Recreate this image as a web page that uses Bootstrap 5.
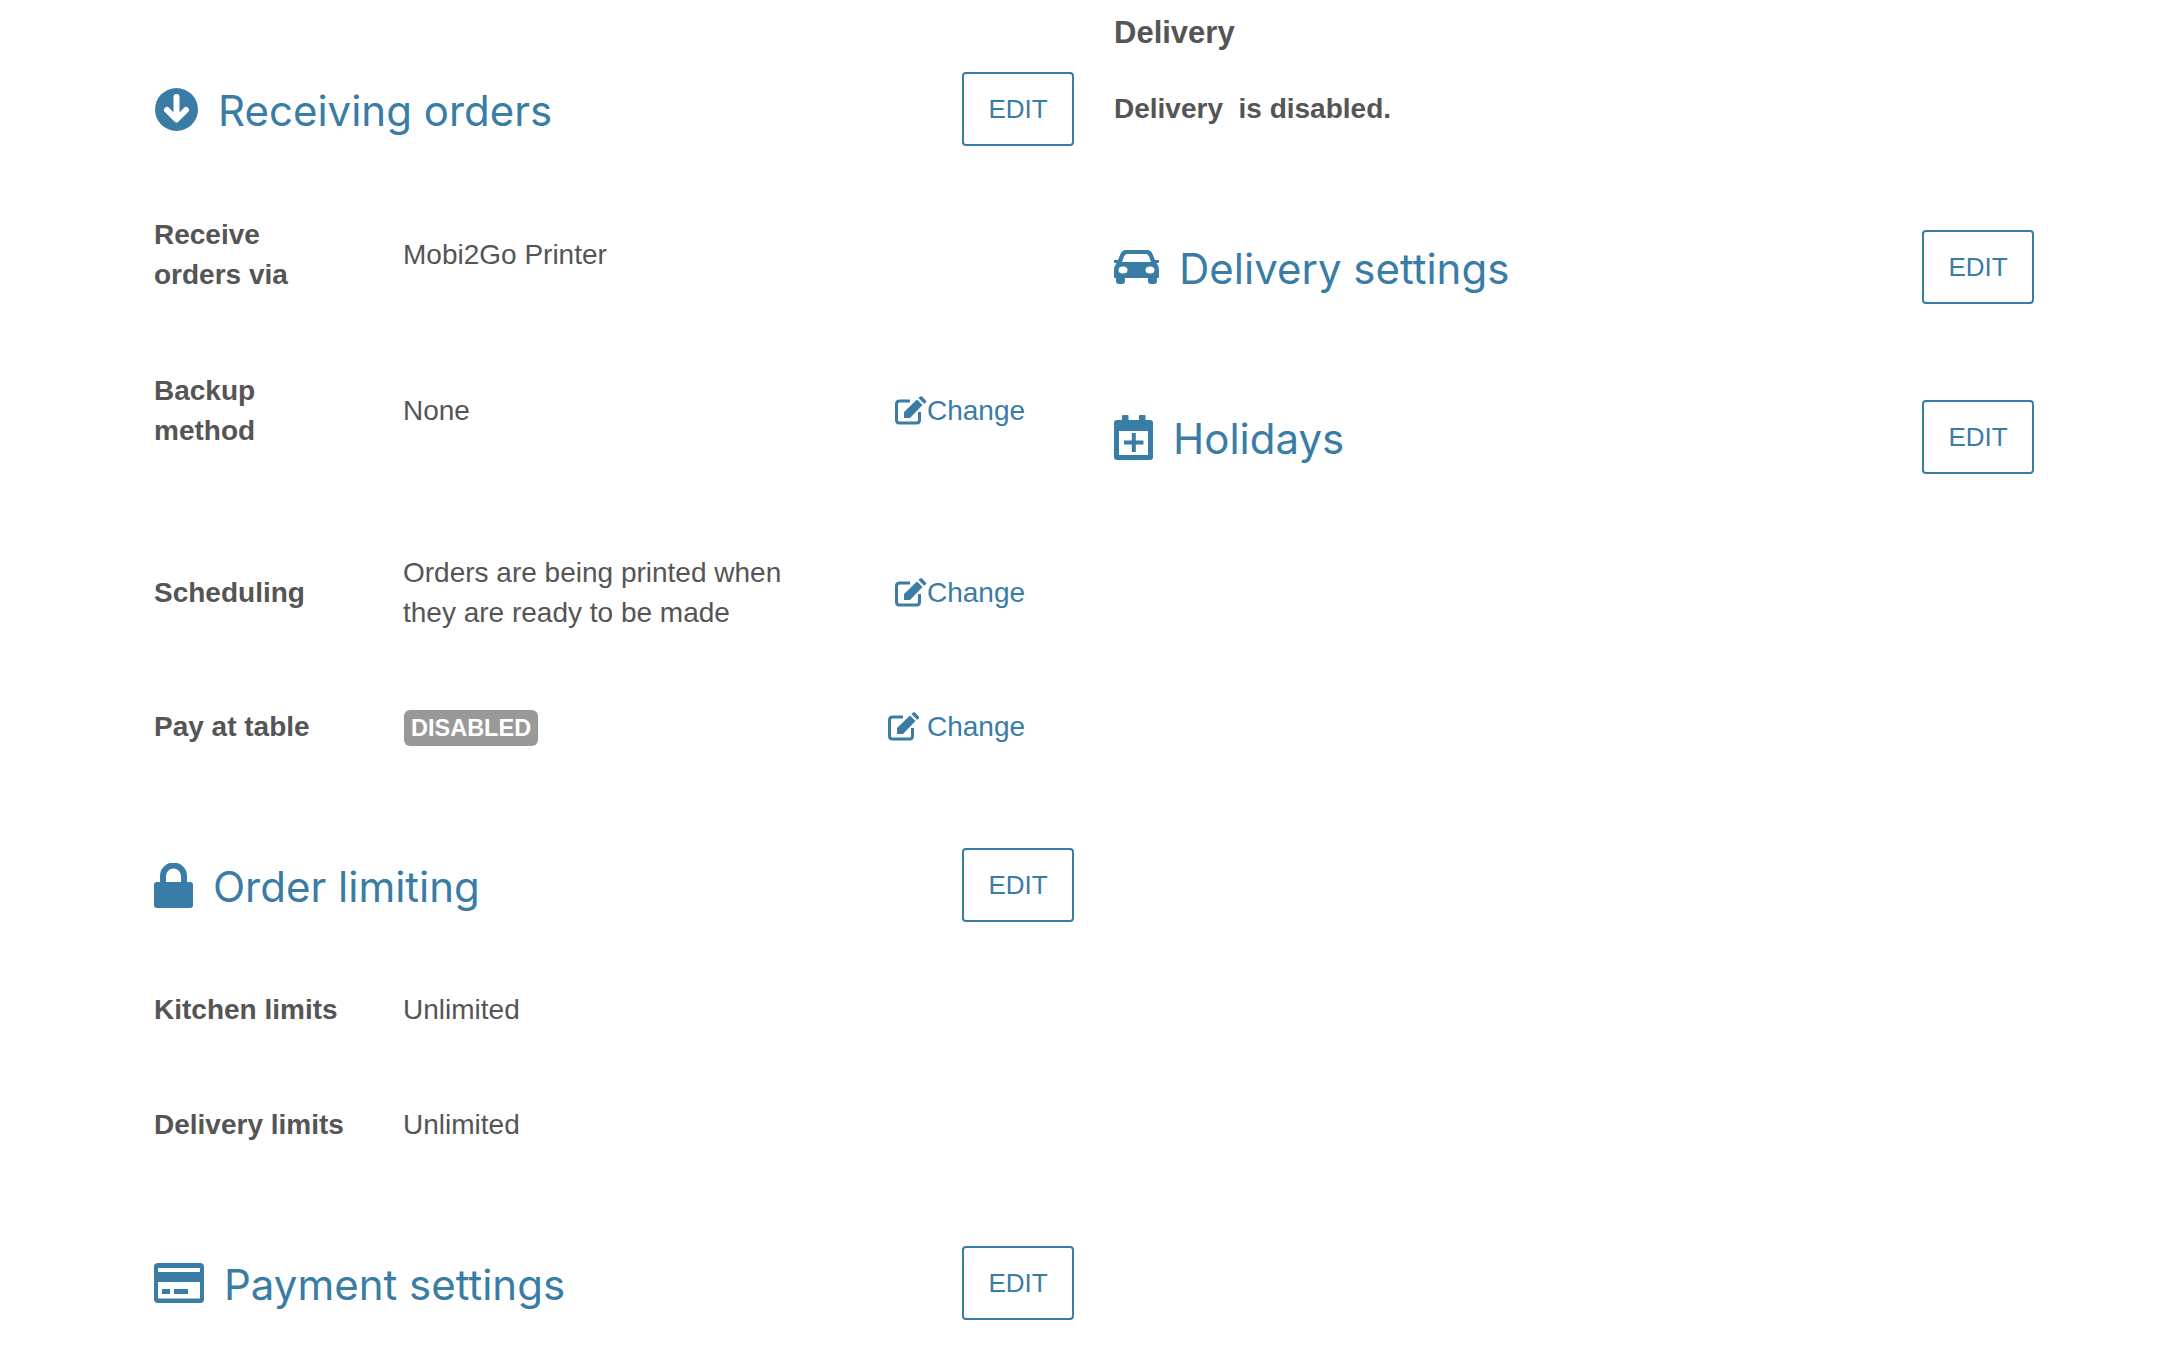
<!DOCTYPE html>
<html lang="en">
<head>
<meta charset="utf-8">
<title>Settings</title>
<link href="https://cdn.jsdelivr.net/npm/bootstrap@5.3.0/dist/css/bootstrap.min.css" rel="stylesheet">
<style>
body { background:#fff; color:#555; font-family:"Liberation Sans",Arial,sans-serif; font-size:28px; line-height:40px; overflow:hidden; height:1362px; }
.sheet { width:1880px; margin-left:154px; gap:40px; }
.pane { width:920px; flex:none; }
.head-bar { height:74px; }
.head-label { gap:20px; }
.head-title { font-family:Inter,sans-serif; font-size:42px; font-weight:400; color:#397ca5; margin:3px 0 0; line-height:74px; }
.edit-btn { width:112px; height:74px; border:2px solid #397ca5; border-radius:4px; color:#397ca5; background:#fff; font-size:26px; line-height:70px; padding:0; }
.edit-btn:hover { color:#397ca5; background:#fff; border-color:#397ca5; }
.info-line { margin-bottom:75px; }
.info-line.first-line { margin-bottom:76px; }
.info-line.extra { margin-bottom:102px; }
.info-line.tight { margin-bottom:74px; }
.info-key { width:249px; flex:none; font-weight:700; padding-right:70px; }
.info-val { flex:1 1 auto; min-width:0; padding-right:124px; }
.info-act { flex:none; width:98px; margin-right:49px; color:#397ca5; text-decoration:none; position:relative; white-space:nowrap; }
.info-act:hover { color:#397ca5; }
.pen { position:absolute; left:-32px; top:5px; }
.pen.far { left:-39px; }
.off-tag { background:#999; color:#fff; font-size:23.5px; line-height:28px; padding:4px 7px; margin-left:1px; border-radius:6px; font-weight:700; display:inline-block; }
.ic-fill { fill:#397ca5; }
.nudge { margin-left:1px; }
.sec-gap { margin-top:101px; }
.pane-title { font-weight:700; font-size:31px; padding-top:13px; margin-bottom:36px; }
.pane-note { font-weight:700; margin-bottom:101px; }
.head-bar.spaced { margin-bottom:96px; }
.first-head { margin-top:72px; margin-bottom:69px; }
.mid-head { margin-bottom:68px; }
</style>
</head>
<body>
<div class="d-flex sheet">
  <div class="pane">
    <div class="head-bar first-head d-flex align-items-center justify-content-between">
      <div class="d-flex align-items-center head-label">
        <svg class="nudge" width="43" height="43" viewBox="0 0 43 43"><circle class="ic-fill" cx="21.500" cy="21.500" r="21.500"/><path d="M21.500 9V31M12 22 21.500 31.500 31 22" fill="none" stroke="#fff" stroke-width="6" stroke-linecap="round" stroke-linejoin="round"/></svg>
        <h2 class="head-title">Receiving orders</h2>
      </div>
      <button type="button" class="btn edit-btn">EDIT</button>
    </div>
    <div class="info-line first-line d-flex align-items-center">
      <div class="info-key">Receive orders via</div>
      <div class="info-val">Mobi2Go Printer</div>
    </div>
    <div class="info-line extra d-flex align-items-center">
      <div class="info-key">Backup method</div>
      <div class="info-val">None</div>
      <a href="#" class="info-act"><svg class="pen" width="32" height="29" viewBox="0 0 32 29"><path d="M15 5H4.500Q1.500 5 1.500 8V24Q1.500 27 4.500 27H21.500Q24.500 27 24.500 24V16" fill="none" stroke="#397ca5" stroke-width="3"/><path class="ic-fill" d="M9 22V16L22 3.500 27.500 9 15 22ZM23.500 2 25 .6Q26 -.2 27 .6L30.800 4.400Q31.600 5.400 30.800 6.400L29.200 7.800Z"/></svg>Change</a>
    </div>
    <div class="info-line tight d-flex align-items-center">
      <div class="info-key">Scheduling</div>
      <div class="info-val">Orders are being printed when they are ready to be made</div>
      <a href="#" class="info-act"><svg class="pen" width="32" height="29" viewBox="0 0 32 29"><path d="M15 5H4.500Q1.500 5 1.500 8V24Q1.500 27 4.500 27H21.500Q24.500 27 24.500 24V16" fill="none" stroke="#397ca5" stroke-width="3"/><path class="ic-fill" d="M9 22V16L22 3.500 27.500 9 15 22ZM23.500 2 25 .6Q26 -.2 27 .6L30.800 4.400Q31.600 5.400 30.800 6.400L29.200 7.800Z"/></svg>Change</a>
    </div>
    <div class="info-line d-flex align-items-center">
      <div class="info-key">Pay at table</div>
      <div class="info-val"><span class="off-tag">DISABLED</span></div>
      <a href="#" class="info-act"><svg class="pen far" width="32" height="29" viewBox="0 0 32 29"><path d="M15 5H4.500Q1.500 5 1.500 8V24Q1.500 27 4.500 27H21.500Q24.500 27 24.500 24V16" fill="none" stroke="#397ca5" stroke-width="3"/><path class="ic-fill" d="M9 22V16L22 3.500 27.500 9 15 22ZM23.500 2 25 .6Q26 -.2 27 .6L30.800 4.400Q31.600 5.400 30.800 6.400L29.200 7.800Z"/></svg>Change</a>
    </div>
    <div class="head-bar mid-head sec-gap d-flex align-items-center justify-content-between">
      <div class="d-flex align-items-center head-label">
        <svg width="39" height="45" viewBox="0 0 39 45"><rect class="ic-fill" y="19" width="39" height="26" rx="3"/><path d="M9 21V13A10.500 10.500 0 0 1 30 13V21" fill="none" stroke="#397ca5" stroke-width="6"/></svg>
        <h2 class="head-title">Order limiting</h2>
      </div>
      <button type="button" class="btn edit-btn">EDIT</button>
    </div>
    <div class="info-line d-flex align-items-center">
      <div class="info-key pe-0">Kitchen limits</div>
      <div class="info-val">Unlimited</div>
    </div>
    <div class="info-line d-flex align-items-center">
      <div class="info-key pe-0">Delivery limits</div>
      <div class="info-val">Unlimited</div>
    </div>
    <div class="head-bar sec-gap d-flex align-items-center justify-content-between">
      <div class="d-flex align-items-center head-label">
        <svg width="50" height="40" viewBox="0 0 50 40"><rect class="ic-fill" width="50" height="40" rx="4"/><path fill="#fff" d="M4 5H46V9H4ZM4 19H46V35.500H4Z"/><path class="ic-fill" d="M8 26H16V31H8ZM20 26H34V31H20Z"/></svg>
        <h2 class="head-title">Payment settings</h2>
      </div>
      <button type="button" class="btn edit-btn">EDIT</button>
    </div>
  </div>
  <div class="pane">
    <div class="pane-title">Delivery</div>
    <div class="pane-note">Delivery&nbsp; is disabled.</div>
    <div class="head-bar spaced d-flex align-items-center justify-content-between">
      <div class="d-flex align-items-center head-label">
        <svg width="45" height="34" viewBox="0 0 45 34"><path class="ic-fill" d="M12 0H33Q37 0 38.500 4L41 10H45V12.500L42.500 13.500Q45 16 45 19V27Q45 28 44 28H43V31Q43 34 40 34H37Q34 34 34 31V28H11V31Q11 34 8 34H5Q2 34 2 31V28H1Q0 28 0 27V19Q0 16 2.500 13.500L0 12.500V10H4L6.500 4Q8 0 12 0Z"/><path fill="#fff" d="M13 4H32Q34 4 35 6.500L37 12H8L10 6.500Q11 4 13 4Z"/><ellipse fill="#fff" cx="9" cy="20" rx="4.500" ry="3.500"/><ellipse fill="#fff" cx="36" cy="20" rx="4.500" ry="3.500"/></svg>
        <h2 class="head-title">Delivery settings</h2>
      </div>
      <button type="button" class="btn edit-btn">EDIT</button>
    </div>
    <div class="head-bar d-flex align-items-center justify-content-between">
      <div class="d-flex align-items-center head-label">
        <svg width="39" height="45" viewBox="0 0 39 45"><rect class="ic-fill" y="5" width="39" height="40" rx="3"/><rect class="ic-fill" x="8" width="6.500" height="10" rx="1"/><rect class="ic-fill" x="25" width="6.500" height="10" rx="1"/><path fill="#fff" d="M5 16H34V40H5Z"/><path d="M10 27.500H29.500M19.800 18V37" stroke="#397ca5" stroke-width="4"/></svg>
        <h2 class="head-title">Holidays</h2>
      </div>
      <button type="button" class="btn edit-btn">EDIT</button>
    </div>
  </div>
</div>
<script src="https://cdn.jsdelivr.net/npm/bootstrap@5.3.0/dist/js/bootstrap.bundle.min.js"></script>
</body>
</html>
